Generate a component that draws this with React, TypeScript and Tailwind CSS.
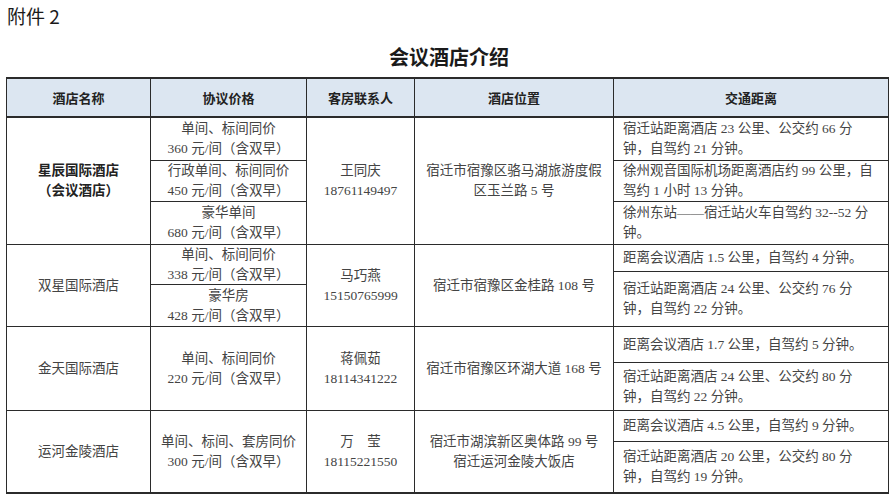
import React from "react";

const body = "font-['Liberation_Serif','Noto_Sans_CJK_SC',serif] text-[13.5px] leading-[20px] text-[#444]";

function Sub({ h, children, left, last }: { h?: number; children: React.ReactNode; left?: boolean; last?: boolean }) {
  return (
    <div
      className={
        "flex flex-col justify-center " +
        (left ? "items-start pl-[9px] text-left " : "items-center text-center ") +
        (last ? "flex-1" : "border-b border-[#2b2b2b] shrink-0")
      }
      style={h ? { height: h } : undefined}
    >
      {children}
    </div>
  );
}

function Center({ w, children, bold }: { w: string; children: React.ReactNode; bold?: boolean }) {
  return (
    <div className={w + " shrink-0 border-r border-[#2b2b2b] flex flex-col items-center justify-center text-center " + (bold ? "font-bold text-[#222]" : "")}>
      {children}
    </div>
  );
}

export default function App() {
  return (
    <div className="w-[896px] h-[500px] bg-white overflow-hidden">
      <div className="pt-[3px] pl-[7px] text-[19px] leading-[26px] text-[#1a1a1a] font-['Noto_Sans_CJK_SC',sans-serif]">
        附件 2
      </div>
      <div className="mt-[14px] text-center text-[20px] leading-[28px] font-bold text-[#1a1a1a] font-['Noto_Sans_CJK_SC',sans-serif] pl-[2px]">
        会议酒店介绍
      </div>
      <div className={"ml-[6px] mt-[6px] w-[883px] border-l border-t-2 border-[#2b2b2b] " + body}>
        {/* header */}
        <div className="flex h-[39px] border-b-2 border-[#2b2b2b] bg-[#dce6f1] font-['Noto_Sans_CJK_SC',sans-serif] font-bold text-[13px] text-[#222]">
          <div className="w-[144px] shrink-0 border-r border-[#2b2b2b] flex items-center justify-center">酒店名称</div>
          <div className="w-[156px] shrink-0 border-r border-[#2b2b2b] flex items-center justify-center">协议价格</div>
          <div className="w-[108px] shrink-0 border-r border-[#2b2b2b] flex items-center justify-center">客房联系人</div>
          <div className="w-[199px] shrink-0 border-r border-[#2b2b2b] flex items-center justify-center">酒店位置</div>
          <div className="flex-1 border-r border-[#2b2b2b] flex items-center justify-center">交通距离</div>
        </div>

        {/* row 1 */}
        <div className="flex h-[127px] border-b border-[#2b2b2b]">
          <Center w="w-[144px]" bold>
            <span>星辰国际酒店</span>
            <span>（会议酒店）</span>
          </Center>
          <div className="w-[156px] shrink-0 border-r border-[#2b2b2b] flex flex-col">
            <Sub h={43}><span>单间、标间同价</span><span>360 元/间（含双早）</span></Sub>
            <Sub h={41}><span>行政单间、标间同价</span><span>450 元/间（含双早）</span></Sub>
            <Sub last><span>豪华单间</span><span>680 元/间（含双早）</span></Sub>
          </div>
          <Center w="w-[108px]">
            <span>王同庆</span>
            <span>18761149497</span>
          </Center>
          <Center w="w-[199px]">
            <span>宿迁市宿豫区骆马湖旅游度假</span>
            <span>区玉兰路 5 号</span>
          </Center>
          <div className="flex-1 border-r border-[#2b2b2b] flex flex-col">
            <Sub h={43} left><span>宿迁站距离酒店 23 公里、公交约 66 分</span><span>钟，自驾约 21 分钟。</span></Sub>
            <Sub h={41} left><span>徐州观音国际机场距离酒店约 99 公里，自</span><span>驾约 1 小时 13 分钟。</span></Sub>
            <Sub last left><span>徐州东站——宿迁站火车自驾约 32--52 分</span><span>钟。</span></Sub>
          </div>
        </div>

        {/* row 2 */}
        <div className="flex h-[82px] border-b border-[#2b2b2b]">
          <Center w="w-[144px]">
            <span>双星国际酒店</span>
          </Center>
          <div className="w-[156px] shrink-0 border-r border-[#2b2b2b] flex flex-col">
            <Sub h={40}><span>单间、标间同价</span><span>338 元/间（含双早）</span></Sub>
            <Sub last><span>豪华房</span><span>428 元/间（含双早）</span></Sub>
          </div>
          <Center w="w-[108px]">
            <span>马巧燕</span>
            <span>15150765999</span>
          </Center>
          <Center w="w-[199px]">
            <span>宿迁市宿豫区金桂路 108 号</span>
          </Center>
          <div className="flex-1 border-r border-[#2b2b2b] flex flex-col">
            <Sub h={27} left><span>距离会议酒店 1.5 公里，自驾约 4 分钟。</span></Sub>
            <Sub last left><span>宿迁站距离酒店 24 公里、公交约 76 分</span><span>钟，自驾约 22 分钟。</span></Sub>
          </div>
        </div>

        {/* row 3 */}
        <div className="flex h-[84px] border-b border-[#2b2b2b]">
          <Center w="w-[144px]">
            <span>金天国际酒店</span>
          </Center>
          <div className="w-[156px] shrink-0 border-r border-[#2b2b2b] flex flex-col">
            <Sub last><span>单间、标间同价</span><span>220 元/间（含双早）</span></Sub>
          </div>
          <Center w="w-[108px]">
            <span>蒋佩茹</span>
            <span>18114341222</span>
          </Center>
          <Center w="w-[199px]">
            <span>宿迁市宿豫区环湖大道 168 号</span>
          </Center>
          <div className="flex-1 border-r border-[#2b2b2b] flex flex-col">
            <Sub h={36} left><span>距离会议酒店 1.7 公里，自驾约 5 分钟。</span></Sub>
            <Sub last left><span>宿迁站距离酒店 24 公里、公交约 80 分</span><span>钟，自驾约 22 分钟。</span></Sub>
          </div>
        </div>

        {/* row 4 */}
        <div className="flex h-[83px] border-b-2 border-[#2b2b2b]">
          <Center w="w-[144px]">
            <span>运河金陵酒店</span>
          </Center>
          <div className="w-[156px] shrink-0 border-r border-[#2b2b2b] flex flex-col">
            <Sub last><span>单间、标间、套房同价</span><span>300 元/间（含双早）</span></Sub>
          </div>
          <Center w="w-[108px]">
            <span>万　莹</span>
            <span>18115221550</span>
          </Center>
          <Center w="w-[199px]">
            <span>宿迁市湖滨新区奥体路 99 号</span>
            <span>宿迁运河金陵大饭店</span>
          </Center>
          <div className="flex-1 border-r border-[#2b2b2b] flex flex-col">
            <Sub h={31} left><span>距离会议酒店 4.5 公里，自驾约 9 分钟。</span></Sub>
            <Sub last left><span>宿迁站距离酒店 20 公里，公交约 80 分</span><span>钟，自驾约 19 分钟。</span></Sub>
          </div>
        </div>
      </div>
    </div>
  );
}
